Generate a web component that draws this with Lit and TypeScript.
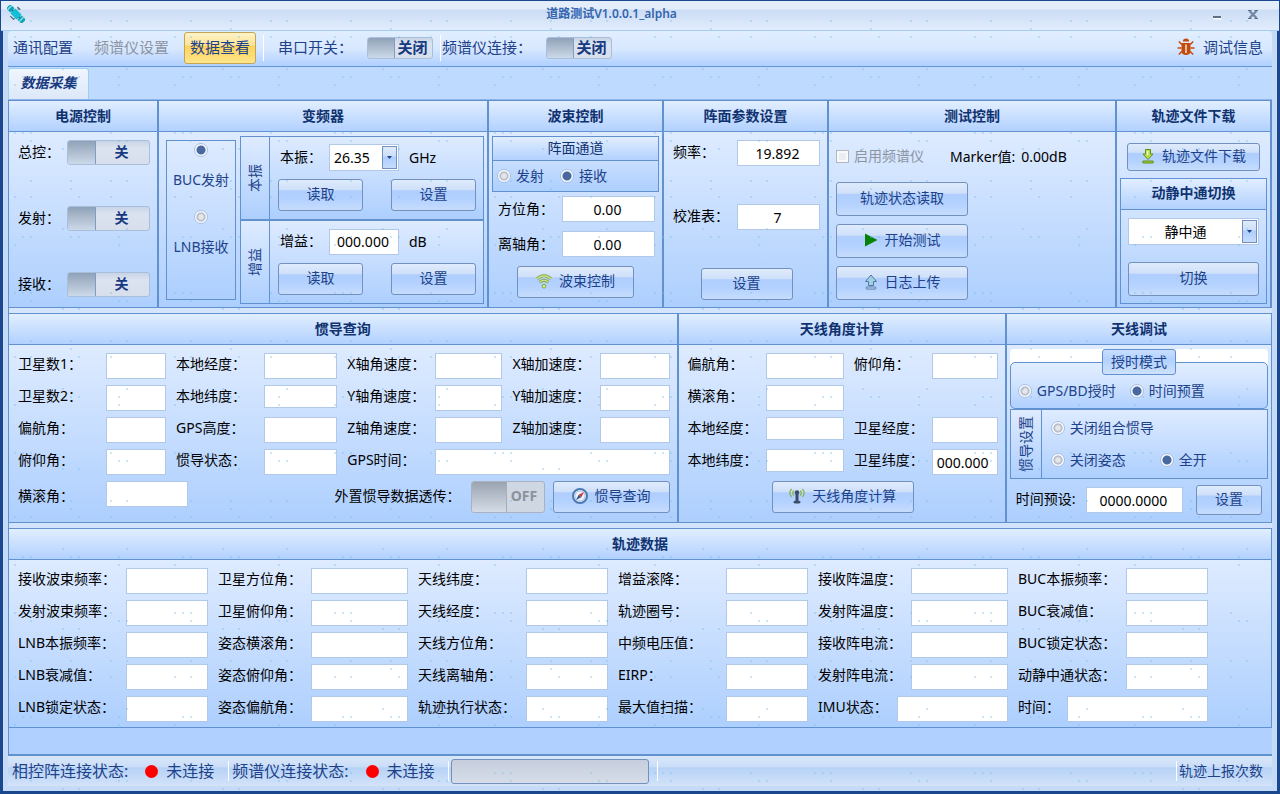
import { LitElement, html, svg, css } from "lit";
import { customElement, property } from "lit/decorators.js";
import { classMap } from "lit/directives/class-map.js";

const controls = css`
  * { box-sizing: border-box; }
  button, input, select {
    font: inherit;
    color: inherit;
    margin: 0;
  }
  .btn {
    display: inline-flex;
    align-items: center;
    justify-content: center;
    gap: 7px;
    height: 32px;
    padding: 0 8px 2px;
    color: #1d4289;
    border: 1px solid #7391be;
    border-radius: 3px;
    background: linear-gradient(#dfebfc 0, #cfe0f9 32%, #afcefe 36%, #b4d2ff 65%, #c6dcfc 100%);
    white-space: nowrap;
  }
  .btn svg { flex: none; }
  .tall { height: 34px; }
  .box {
    height: 26px;
    min-width: 0;
    width: 100%;
    padding: 0 4px;
    color: #000;
    background: #fff;
    border: 1px solid #b2c8e8;
    border-radius: 0;
    outline: none;
  }
  .box.center { text-align: center; padding: 0 6px 0 4px; }
  .box.short { height: 23px; }
  .radio {
    display: inline-flex;
    align-items: center;
    gap: 5px;
    color: #1d4289;
    white-space: nowrap;
  }
  .radio input {
    appearance: none;
    flex: none;
    width: 14px;
    height: 14px;
    border: 1px solid #a8c0e2;
    border-radius: 50%;
    background: radial-gradient(circle, #e4e6ea 0 2px, #cfd3d9 3px, #a9b1bd 4px, #f8faff 5px);
  }
  .radio input:checked {
    background: radial-gradient(circle, #48699f 0 4px, #f8faff 5px);
  }
  .combo { position: relative; display: flex; }
  .combo select {
    appearance: none;
    width: 100%;
    height: 27px;
    padding: 0 20px 0 4px;
    color: #000;
    background: #fff;
    border: 1px solid #b2c8e8;
    border-radius: 0;
  }
  .combo.center select { text-align: center; text-align-last: center; }
  .arrow {
    position: absolute;
    top: 2px;
    right: 2px;
    bottom: 2px;
    width: 15px;
    display: flex;
    align-items: center;
    justify-content: center;
    border: 1px solid #7391be;
    background: linear-gradient(#dfebfc 0, #cfe0f9 40%, #afcefe 50%, #c6dcfc 100%);
    pointer-events: none;
  }
`;

@customElement("toggle-switch")
class ToggleSwitch extends LitElement {
  @property() text = "";
  @property() label = "";
  @property({ type: Boolean }) muted = false;

  static styles = css`
    :host { display: block; }
    button {
      box-sizing: border-box;
      width: 100%;
      height: 100%;
      padding: 0;
      display: flex;
      align-items: stretch;
      font: inherit;
      font-weight: 700;
      color: #16397f;
      border: 1px solid #a9bedb;
      border-radius: 3px;
      background: linear-gradient(#c8d4e6, #dbe3f0 30%, #d7dfec);
      overflow: hidden;
    }
    .knob {
      width: var(--knob, 28px);
      flex: none;
      box-sizing: border-box;
      border-right: 1px solid #7f9cc6;
      background: linear-gradient(#8fa2b8, #a9b8ca 40%, #cbd9e9);
    }
    .text {
      flex: 1;
      display: flex;
      align-items: center;
      justify-content: center;
      padding: 0 2px 2px 0;
    }
    .muted { color: #8c929c; border-color: #a8b2c0; background: #cfd7e3; }
    .muted .knob { border-color: #a4aebc; background: linear-gradient(#9aa3b0, #b7c0cc 50%, #d5dce6); }
  `;

  render() {
    return html`<button type="button" role="switch" aria-checked="false" aria-label=${this.label || this.text}
      class=${classMap({ muted: this.muted })}>
      <span class="knob"></span><span class="text">${this.text}</span>
    </button>`;
  }
}

const icons = {
  satellite: html`<svg width="18" height="18" viewBox="0 0 18 18" aria-hidden="true">
    <g transform="translate(9 9) rotate(45)">
      <rect x="-11" y="-3" width="6" height="6" fill="#0fa3b5" />
      <rect x="5" y="-3" width="6" height="6" fill="#0fa3b5" />
      <path d="M-9-3v6M7.500-3v6" stroke="#86dfe6" stroke-width="1.500" />
      <rect x="-4.500" y="-3.500" width="9" height="7" rx="1" fill="#13bfd6" />
      <path d="M-5-1v2M5-1v2" stroke="#0b7f93" stroke-width="1.500" />
      <path d="M-2-4.500v-2M2 4v2M-2.500 5.500h5M-4-6h4" stroke="#4c6c7c" stroke-width="1.300" />
    </g>
  </svg>`,
  bug: html`<svg width="18" height="18" viewBox="0 0 18 18" aria-hidden="true">
    <path d="M5.800 3.500C5.800 1.600 7.200.5 9 .5s3.200 1.100 3.200 3z" fill="#c54a0a" />
    <path d="M4.500 5h9v8.500c0 2.200-1.800 3.500-4.500 3.500s-4.500-1.300-4.500-3.500z" fill="#c54a0a" />
    <path d="M9 6.500v8.500" stroke="#f6ece6" stroke-width="1.400" />
    <path d="M.5 10h4M13.500 10h4M1.800 3.500l3 3M16.200 3.500l-3 3M1.800 16.500l3-3M16.200 16.500l-3-3" stroke="#c54a0a" stroke-width="1.600" fill="none" />
  </svg>`,
  wifi: html`<svg width="16" height="16" viewBox="0 0 16 16" aria-hidden="true" fill="none">
    <path d="M1 6C5 1.800 11 1.800 15 6" stroke="#84a63c" stroke-width="3" />
    <path d="M1 6C5 1.800 11 1.800 15 6" stroke="#d3e79a" stroke-width="1.200" />
    <path d="M3.600 9.400c2.600-2.600 6.200-2.600 8.800 0" stroke="#84a63c" stroke-width="3" />
    <path d="M3.600 9.400c2.600-2.600 6.200-2.600 8.800 0" stroke="#d3e79a" stroke-width="1.200" />
    <circle cx="8" cy="13.200" r="1.900" fill="#d3e79a" stroke="#84a63c" />
  </svg>`,
  play: html`<svg width="14" height="14" viewBox="0 0 14 14" aria-hidden="true">
    <path d="M1 .5L13.500 7 1 13.500z" fill="#078207" />
  </svg>`,
  upload: html`<svg width="14" height="16" viewBox="0 0 14 16" aria-hidden="true" stroke="#5077a8" stroke-linejoin="round">
    <path d="M7 1l5.500 6.500H9.500v4h-5v-4h-3z" fill="#9fd0e4" />
    <rect x="2" y="13" width="10" height="2" rx="1" fill="#d7e8f6" />
  </svg>`,
  download: html`<svg width="14" height="16" viewBox="0 0 14 16" aria-hidden="true" stroke="#5f8f1c" stroke-linejoin="round">
    <path d="M7 11.500L2 6h2.500V1.500h5V6H12z" fill="#b9de44" />
    <rect x="1.500" y="13" width="11" height="2" rx="1" fill="#a4d033" />
    <path d="M6.500 3v4" stroke="#f1fac8" stroke-width="1.500" />
  </svg>`,
  compass: html`<svg width="16" height="16" viewBox="0 0 16 16" aria-hidden="true">
    <circle cx="8" cy="8" r="7" fill="#eef3f9" stroke="#4a78b4" stroke-width="2" />
    <circle cx="8" cy="8" r="5" fill="none" stroke="#9db6d4" stroke-width=".8" />
    <path d="M12 4L9.300 9.300 6.700 6.700z" fill="#d8333a" /><path d="M4 12l2.700-5.300 2.600 2.600z" fill="#31589a" />
  </svg>`,
  antenna: html`<svg width="16" height="16" viewBox="0 0 16 16" aria-hidden="true" fill="none">
    <path d="M4.800 2.500c-1.300 1.500-1.300 3.500 0 5M11.200 2.500c1.300 1.500 1.300 3.500 0 5M2.600 1C.4 3.500.4 6.500 2.600 9M13.400 1c2.200 2.500 2.200 5.500 0 8" stroke="#8bb34a" stroke-width="1.200" />
    <circle cx="8" cy="4.500" r="2.300" fill="#3d4d63" />
    <path d="M8 6v8" stroke="#3d4d63" stroke-width="3" />
    <ellipse cx="8" cy="14" rx="3.600" ry="1.600" fill="#3d4d63" />
  </svg>`,
};

const caret = html`<span class="arrow"><svg width="5" height="3" viewBox="0 0 5 3" aria-hidden="true"><path d="M0 0h5L2.500 3z" fill="#1d4289" /></svg></span>`;

type Field = [label: string, value?: string, short?: boolean];

const inertial: Field[] = [
  ["卫星数1："], ["本地经度："], ["X轴角速度："], ["X轴加速度："],
  ["卫星数2："], ["本地纬度：", "", true], ["Y轴角速度："], ["Y轴加速度："],
  ["偏航角："], ["GPS高度："], ["Z轴角速度："], ["Z轴加速度："],
  ["俯仰角："], ["惯导状态："], ["GPS时间："],
];

const antennaAngles: (Field | null)[] = [
  ["偏航角："], ["俯仰角："],
  ["横滚角："], null,
  ["本地经度：", "", true], ["卫星经度："],
  ["本地纬度：", "", true], ["卫星纬度：", "000.000"],
];

const track: string[][] = [
  ["接收波束频率：", "卫星方位角：", "天线纬度：", "增益滚降：", "接收阵温度：", "BUC本振频率："],
  ["发射波束频率：", "卫星俯仰角：", "天线经度：", "轨迹圈号：", "发射阵温度：", "BUC衰减值："],
  ["LNB本振频率：", "姿态横滚角：", "天线方位角：", "中频电压值：", "接收阵电流：", "BUC锁定状态："],
  ["LNB衰减值：", "姿态俯仰角：", "天线离轴角：", "EIRP：", "发射阵电流：", "动静中通状态："],
  ["LNB锁定状态：", "姿态偏航角：", "轨迹执行状态：", "最大值扫描：", "IMU状态：", "时间："],
];

/* Speck positions of the window skin's 160px tile. */
const specks: [number, number][] = [
  [30, 20], [70, 20], [110, 20], [126, 20], [70, 28],
  [14, 36], [30, 36], [78, 36], [110, 36],
  [62, 68], [126, 68],
  [22, 76], [30, 76], [70, 76], [78, 76], [118, 76],
  [14, 84], [118, 84],
  [14, 132], [22, 132], [30, 132], [110, 132],
  [30, 140], [118, 140], [126, 140],
  [62, 148], [78, 148],
];

@customElement("app-root")
class AppRoot extends LitElement {
  static styles = [
    controls,
    css`
      :host {
        position: relative;
        display: flex;
        flex-direction: column;
        box-sizing: border-box;
        min-height: 100vh;
        min-width: 1100px;
        font: 14px/20px "Noto Sans", "Noto Sans CJK SC", sans-serif;
        color: #000;
        background: #1b478f;
        padding-top: 1px;
        padding-bottom: 3px;
      }
      .titlebar {
        display: grid;
        grid-template-columns: 1fr auto 1fr;
        align-items: center;
        height: 30px;
        margin: 0 1px;
        padding: 0 21px 4px 6px;
        background: linear-gradient(#e4edfb 0 8px, #cbdcf5 9px, #e2edfc 29px);
        border-bottom: 1px solid #a3cbf4;
      }
      .titlebar svg { display: block; }
      .titlebar h1 {
        margin: 0;
        padding-right: 42px;
        font-size: 12px;
        line-height: 16px;
        font-weight: 600;
        color: #3465ae;
      }
      .winbtns { display: flex; justify-content: flex-end; gap: 26px; }
      .winbtns button { border: 0; padding: 0; background: none; }
      .frame {
        flex: 1;
        display: flex;
        flex-direction: column;
        margin: 0 3px;
        padding: 0 5px 5px;
        background: #c5dbf8;
      }
      .toolbar {
        display: flex;
        align-items: center;
        height: 36px;
        padding: 0 9px 2px 5px;
        font-size: 15px;
        color: #1d4289;
        border-radius: 4px 4px 0 0;
        border-bottom: 1px solid #6694d6;
        background: linear-gradient(#e1eeff, #d8e8ff 50%, #b0d0ff);
      }
      .toolbar button { white-space: nowrap; }
      .tool { border: 0; padding: 0 0 2px; background: none; }
      .tool:disabled { color: #8d95a3; margin-left: 21px; }
      .tool.active {
        height: 32px;
        margin-left: 15px;
        padding: 0 5px 2px;
        border: 1px solid #c6a455;
        border-radius: 3px;
        background: linear-gradient(#fdf3c8, #fbe498 40%, #fcd45c 45%, #fde58b 100%);
      }
      .tool.icon { display: flex; align-items: center; gap: 8px; margin-left: auto; }
      .sep { width: 1px; height: 26px; background: #fff; margin: 0 1px 0 7px; }
      .toolbar .caption { width: 89px; margin-left: 13px; padding-bottom: 2px; white-space: nowrap; }
      .toolbar .caption.wide { width: 104px; margin-left: 0; }
      .toolbar toggle-switch { width: 66px; height: 22px; --knob: 27px; font-size: 15px; }
      .tabs { display: flex; height: 33px; padding-top: 1px; background: #bfdaff; border-bottom: 1px solid #8db5ec; }
      .tab {
        width: 81px;
        padding: 0 0 2px;
        font-weight: 700;
        font-style: italic;
        color: #16397f;
        border: 1px solid #9cd0ee;
        border-bottom: 0;
        border-radius: 3px 3px 0 0;
        background: linear-gradient(#eff5fe, #dce8f9);
      }
      main {
        flex: 1;
        display: flex;
        flex-direction: column;
        background: linear-gradient(#d8e7fe, #d0e2fd 75%, #b0d0ff 85%);
        border: solid #6291d0;
        border-width: 1px 0 2px 1px;
      }
      .panels {
        display: grid;
        gap: 2px;
        background: #6291d0;
        border-right: 1px solid #6291d0;
        border-bottom: 1px solid #6291d0;
      }
      .panels + .panels { margin-top: 5px; border-top: 1px solid #6291d0; }
      .top { grid-template-columns: 148fr 328fr 173fr 163fr 286fr 153fr; border-right-width: 2px; }
      .middle { grid-template-columns: 667fr 326fr 264fr; }
      .panel { display: flex; flex-direction: column; min-width: 0; }
      h2 {
        margin: 0;
        height: 31px;
        font-size: 14px;
        line-height: 30px;
        font-weight: 700;
        text-align: center;
        color: #10326f;
        background: linear-gradient(#e1eeff, #b2d1ff);
        border-bottom: 1px solid #6291d0;
      }
      .body {
        flex: 1;
        display: flex;
        flex-direction: column;
        background: linear-gradient(#deebff, #adcffe);
      }
      .row { display: flex; align-items: center; }
      .row label, .lbl { white-space: nowrap; }
      .row label, .power span { padding-bottom: 2px; }
      .group { border: 1px solid #6291d0; background: linear-gradient(#deebff, #adcffe); }

      .power { justify-content: space-between; padding: 8px 7px 10px 9px; }
      .power .row { justify-content: space-between; }
      .power toggle-switch { width: 83px; height: 25px; }

      .converter { flex-direction: row; gap: 4px; padding: 4px 3px 3px 7px; }
      .band { width: 70px; margin: 4px 0; }
      .band .radio { display: flex; flex-direction: column; gap: 13px; height: 67px; padding-top: 2px; }
      .stack { flex: 1; display: flex; flex-direction: column; gap: 2px; border: 1px solid #6291d0; background: #6291d0; }
      .side { flex: 1; display: flex; background: linear-gradient(#deebff, #adcffe); }
      .vert {
        display: flex;
        align-items: center;
        justify-content: center;
        width: 29px;
        color: #1d4289;
        border-right: 1px solid #6291d0;
        white-space: nowrap;
      }
      .nav .vert { width: 31px; }
      .vert span { writing-mode: vertical-rl; text-orientation: sideways; transform: rotate(180deg); }
      .oscillator { flex: 1; display: flex; flex-direction: column; gap: 8px; padding: 7px 7px 8px 8px; }
      .oscillator .row { height: 27px; padding-left: 2px; }
      .oscillator .row label { width: 49px; }
      .oscillator .combo, .oscillator .box { width: 70px; }
      .unit { margin-left: 10px; }
      .pair { display: flex; justify-content: space-between; }
      .pair .btn { width: 85px; }

      .beam { padding: 4px 3px 9px; }
      .beam .group { height: 56px; margin-bottom: 4px; }
      h3 {
        margin: 0;
        height: 24px;
        font-size: 14px;
        line-height: 22px;
        font-weight: 400;
        text-align: center;
        color: #10326f;
        border-bottom: 1px solid #6291d0;
        background: linear-gradient(#e1eeff, #b2d1ff);
      }
      .choices { display: flex; align-items: center; height: 30px; gap: 16px; padding-left: 4px; }
      .beam .row { margin-bottom: 9px; padding: 0 4px 0 6px; }
      .beam .row label { width: 64px; flex: none; padding: 0; }
      .beam .btn { width: 117px; align-self: center; }

      .array { gap: 38px; padding: 8px 7px 7px 9px; }
      .array .row label { width: 64px; flex: none; }
      .array .btn { width: 92px; align-self: center; }

      .testing { padding: 0 7px 7px; gap: 8px; align-items: flex-start; }
      .testing .row { height: 50px; margin-bottom: -8px; }
      .testing .btn { width: 132px; }
      .check { display: flex; align-items: center; gap: 5px; width: 114px; color: #8d95a3; }
      .check input {
        appearance: none;
        width: 13px;
        height: 13px;
        border: 1px solid #b3b8c0;
        background: #e9ecf0;
        box-shadow: inset 0 0 0 2px #f8f9fb;
      }
      .testing output { margin-left: 6px; }

      .files { padding: 11px 3px 3px; }
      .files > .btn { height: 28px; margin: 0 7px 7px; }
      .files .group { flex: 1; display: flex; flex-direction: column; }
      .files .group h2 { line-height: 28px; }
      .files .fill { display: flex; flex-direction: column; gap: 17px; padding: 8px 7px 7px; }

      .inertial { padding: 8px 7px 9px 9px; gap: 6px; }
      .grid4 { display: grid; grid-template-columns: 88px 60fr 98px 73fr 98px 67fr 98px 69fr; row-gap: 6px; }
      .grid2 { display: grid; grid-template-columns: 78px 78fr 88px 66fr; row-gap: 6px; }
      .lbl { line-height: 22px; height: 26px; }
      .lbl.next { padding-left: 10px; }
      .span3 { grid-column: span 3; }
      .span2 { grid-column: span 2; }
      .inertial .row .first { width: 88px; }
      .inertial .row .box { width: 82px; margin-bottom: 6px; }
      .inertial .row .through { margin-left: auto; width: 136px; padding-bottom: 2px; }
      .inertial toggle-switch { width: 74px; height: 32px; --knob: 35px; margin-right: 8px; }
      .inertial .btn { width: 117px; }

      .angles { padding: 8px 7px 9px 9px; gap: 6px; }
      .angles .btn { width: 142px; align-self: center; }

      .debug { padding: 4px 3px 7px; }
      .timing { height: 60px; border-radius: 4px 4px 0 0; background: linear-gradient(#fff 0 24px, transparent 24px); }
      fieldset {
        margin: 0;
        padding: 0;
        height: 60px;
        min-width: 0;
        border: 1px solid #6291d0;
        border-radius: 5px;
        background: linear-gradient(#e1eeff, #d4e5ff 40%, #b0d0ff);
      }
      legend {
        margin: 0 auto;
        width: 74px;
        height: 26px;
        padding: 0;
        line-height: 24px;
        text-align: center;
        color: #1d4289;
        border: 1px solid #6291d0;
        border-radius: 3px;
        background: linear-gradient(#c8deff, #b2d1ff 40%, #cfe1fb);
      }
      fieldset .choices { padding-left: 7px; gap: 14px; height: 31px; }
      .nav { display: flex; height: 70px; }
      .options { flex: 1; display: grid; grid-template-columns: 109px 1fr; grid-auto-rows: 31px; align-items: center; padding: 3px 9px; }
      .options .span2 { justify-self: start; }
      .debug .row { margin-top: 6px; padding: 0 6px; }
      .debug .row label { width: 70px; flex: none; }
      .debug .row .box { flex: 1; margin-right: 13px; }
      .debug .btn { width: 66px; height: 30px; }

      .track { display: grid; grid-template-columns: repeat(6, 1fr); row-gap: 6px; padding: 8px 53px 5px 9px; }
      .cell { display: flex; padding-right: 10px; min-width: 0; }
      .cell .lbl { width: 108px; flex: none; }
      .cell .lbl.mid { width: 93px; }
      .cell .lbl.imu { width: 79px; }
      .cell .lbl.time { width: 49px; }

      footer {
        display: flex;
        align-items: center;
        height: 30px;
        padding: 0 9px 0 4px;
        font-size: 16px;
        color: #1d4289;
        background: linear-gradient(#d9e6f8, #cbdef8 35%, #b6d2f6 40%, #d3e3f9);
        white-space: nowrap;
      }
      .lamp { width: 13px; height: 13px; margin: 0 8px 0 17px; border-radius: 50%; background: #f00; }
      footer .sep { height: 20px; margin: 0 3px 0 14px; }
      .progress { width: 198px; height: 25px; border: 1px solid #7391be; border-radius: 3px; background: linear-gradient(#c6cedd, #d6dde9); }
      footer .sep.near { margin-left: 8px; }
      footer .sep.mid { margin: 0 2px 0 13px; }
      footer .sep.end { margin: 0 2px 0 auto; }
      .small { font-size: 14px; }
      .specks { position: absolute; inset: 0; width: 100%; height: 100%; pointer-events: none; }
    `,
  ];

  private uid = 0;

  private field(f: Field | null, next: boolean, wide = false) {
    if (!f) return html`<span class="span2"></span>`;
    const id = `f${this.uid++}`;
    return html`<label class=${classMap({ lbl: true, next })} for=${id}>${f[0]}</label
      ><input id=${id} class=${classMap({ box: true, short: !!f[2], span3: wide })} .value=${f[1] ?? ""} />`;
  }

  private radio(name: string, text: string, checked = false) {
    return html`<label class="radio"><input type="radio" name=${name} ?checked=${checked} /><span>${text}</span></label>`;
  }

  private power(text: string) {
    return html`<div class="row"><span>${text}：</span><toggle-switch text="关" label=${text}></toggle-switch></div>`;
  }

  private trackCell(text: string, col: number) {
    const id = `t${this.uid++}`;
    const cls = { lbl: true, mid: col % 3 === 1 && text !== "IMU状态：", imu: text === "IMU状态：", time: text === "时间：" };
    return html`<div class="cell"><label class=${classMap(cls)} for=${id}>${text}</label><input id=${id} class="box" /></div>`;
  }

  render() {
    this.uid = 0;
    return html`
      <header class="titlebar">
        ${icons.satellite}
        <h1>道路测试V1.0.0.1_alpha</h1>
        <div class="winbtns">
          <button type="button" aria-label="最小化">
            <svg width="10" height="12" viewBox="0 0 10 12"><path d="M1 10.500h8" stroke="#fff" stroke-width="2" /><path d="M1 9h8" stroke="#5f6f88" stroke-width="2" /></svg>
          </button>
          <button type="button" aria-label="关闭">
            <svg width="10" height="12" viewBox="0 0 10 12"><path d="M1.500 3l7 7m0-7l-7 7" stroke="#7286a5" stroke-width="2.200" /><path d="M0 2.500h3.500M6.500 2.500H10M0 10.500h3.500M6.500 10.500H10" stroke="#5f6f88" /></svg>
          </button>
        </div>
      </header>
      <div class="frame">
        <nav class="toolbar">
          <button type="button" class="tool">通讯配置</button>
          <button type="button" class="tool" disabled>频谱仪设置</button>
          <button type="button" class="tool active">数据查看</button>
          <span class="sep"></span>
          <span class="caption">串口开关：</span>
          <toggle-switch text="关闭" label="串口开关"></toggle-switch>
          <span class="sep"></span>
          <span class="caption wide">频谱仪连接：</span>
          <toggle-switch text="关闭" label="频谱仪连接"></toggle-switch>
          <button type="button" class="tool icon">${icons.bug}调试信息</button>
        </nav>
        <div class="tabs" role="tablist"><button type="button" class="tab" role="tab" aria-selected="true">数据采集</button></div>
        <main>
          <div class="panels top">
            <section class="panel">
              <h2>电源控制</h2>
              <div class="body power">${["总控", "发射", "接收"].map((t) => this.power(t))}</div>
            </section>
            <section class="panel">
              <h2>变频器</h2>
              <div class="body converter">
                <div class="group band">${this.radio("band", "BUC发射", true)}${this.radio("band", "LNB接收")}</div>
                <div class="stack">
                  <div class="side">
                    <div class="vert"><span>本振</span></div>
                    <div class="oscillator">
                      <div class="row">
                        <label for="lo">本振：</label>
                        <span class="combo"><select id="lo"><option>26.35</option></select>${caret}</span>
                        <span class="unit">GHz</span>
                      </div>
                      <div class="pair"><button type="button" class="btn">读取</button><button type="button" class="btn">设置</button></div>
                    </div>
                  </div>
                  <div class="side">
                    <div class="vert"><span>增益</span></div>
                    <div class="oscillator">
                      <div class="row">
                        <label for="gain">增益：</label>
                        <input id="gain" class="box center" .value=${"000.000"} />
                        <span class="unit">dB</span>
                      </div>
                      <div class="pair"><button type="button" class="btn">读取</button><button type="button" class="btn">设置</button></div>
                    </div>
                  </div>
                </div>
              </div>
            </section>
            <section class="panel">
              <h2>波束控制</h2>
              <div class="body beam">
                <div class="group">
                  <h3>阵面通道</h3>
                  <div class="choices">${this.radio("channel", "发射")}${this.radio("channel", "接收", true)}</div>
                </div>
                <div class="row"><label for="az">方位角：</label><input id="az" class="box center" .value=${"0.00"} /></div>
                <div class="row"><label for="off">离轴角：</label><input id="off" class="box center" .value=${"0.00"} /></div>
                <button type="button" class="btn">${icons.wifi}波束控制</button>
              </div>
            </section>
            <section class="panel">
              <h2>阵面参数设置</h2>
              <div class="body array">
                <div class="row"><label for="freq">频率：</label><input id="freq" class="box center" .value=${"19.892"} /></div>
                <div class="row"><label for="cal">校准表：</label><input id="cal" class="box center" .value=${"7"} /></div>
                <button type="button" class="btn">设置</button>
              </div>
            </section>
            <section class="panel">
              <h2>测试控制</h2>
              <div class="body testing">
                <div class="row">
                  <label class="check"><input type="checkbox" disabled />启用频谱仪</label>
                  <span>Marker值:</span><output>0.00dB</output>
                </div>
                <button type="button" class="btn tall">轨迹状态读取</button>
                <button type="button" class="btn tall">${icons.play}开始测试</button>
                <button type="button" class="btn tall">${icons.upload}日志上传</button>
              </div>
            </section>
            <section class="panel">
              <h2>轨迹文件下载</h2>
              <div class="body files">
                <button type="button" class="btn">${icons.download}轨迹文件下载</button>
                <div class="group">
                  <h2>动静中通切换</h2>
                  <div class="fill">
                    <span class="combo center"><select aria-label="动静中通切换"><option>静中通</option></select>${caret}</span>
                    <button type="button" class="btn tall">切换</button>
                  </div>
                </div>
              </div>
            </section>
          </div>

          <div class="panels middle">
            <section class="panel">
              <h2>惯导查询</h2>
              <div class="body inertial">
                <div class="grid4">${inertial.map((f, i) => this.field(f, i % 4 > 0, i === inertial.length - 1))}</div>
                <div class="row">
                  <label class="first" for="roll">横滚角：</label><input id="roll" class="box" />
                  <span class="through">外置惯导数据透传：</span>
                  <toggle-switch text="OFF" label="外置惯导数据透传" muted></toggle-switch>
                  <button type="button" class="btn">${icons.compass}惯导查询</button>
                </div>
              </div>
            </section>
            <section class="panel">
              <h2>天线角度计算</h2>
              <div class="body angles">
                <div class="grid2">${antennaAngles.map((f, i) => this.field(f, i % 2 > 0))}</div>
                <button type="button" class="btn">${icons.antenna}天线角度计算</button>
              </div>
            </section>
            <section class="panel">
              <h2>天线调试</h2>
              <div class="body debug">
                <div class="timing">
                  <fieldset>
                    <legend>授时模式</legend>
                    <div class="choices">${this.radio("timing", "GPS/BD授时")}${this.radio("timing", "时间预置", true)}</div>
                  </fieldset>
                </div>
                <div class="group nav">
                  <div class="vert"><span>惯导设置</span></div>
                  <div class="options">
                    <span class="span2">${this.radio("nav", "关闭组合惯导")}</span>
                    ${this.radio("nav", "关闭姿态")}${this.radio("nav", "全开", true)}
                  </div>
                </div>
                <div class="row">
                  <label for="preset">时间预设:</label><input id="preset" class="box center" .value=${"0000.0000"} />
                  <button type="button" class="btn">设置</button>
                </div>
              </div>
            </section>
          </div>

          <div class="panels">
            <section class="panel">
              <h2>轨迹数据</h2>
              <div class="body track">${track.map((r) => r.map((t, i) => this.trackCell(t, i)))}</div>
            </section>
          </div>
        </main>
        <footer>
          <span>相控阵连接状态:</span><span class="lamp"></span><span>未连接</span>
          <span class="sep"></span>
          <span>频谱仪连接状态:</span><span class="lamp"></span><span>未连接</span>
          <span class="sep mid"></span>
          <div class="progress" role="progressbar" aria-label="进度" aria-valuenow="0"></div>
          <span class="sep near"></span>
          <span class="sep end"></span>
          <span class="small">轨迹上报次数</span>
        </footer>
      </div>
      <svg class="specks" aria-hidden="true">
        <defs>
          <pattern id="specks" width="160" height="160" patternUnits="userSpaceOnUse">
            ${specks.map(([x, y]) => svg`<rect x=${x} y=${y} width="2" height="2" fill="#6cbcea" fill-opacity=".35" />`)}
          </pattern>
        </defs>
        <rect width="100%" height="100%" fill="url(#specks)" />
      </svg>
    `;
  }
}
